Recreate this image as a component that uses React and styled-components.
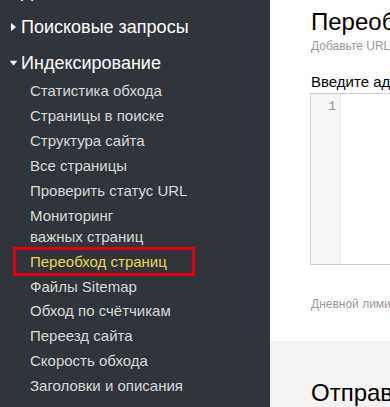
import React from 'react'
import styled, { createGlobalStyle } from 'styled-components'

const GlobalStyle = createGlobalStyle`
  html, body {
    margin: 0;
    padding: 0;
    overflow: hidden;
    background: #fff;
  }
  body {
    font-family: 'Liberation Sans', Arial, sans-serif;
  }
`

const Layout = styled.div`
  display: flex;
  width: 390px;
  height: 407px;
  overflow: hidden;
`

const Sidebar = styled.aside`
  flex: 0 0 270px;
  background: #2f353b;
  overflow: hidden;
`

const Nav = styled.nav`
  margin-top: -21px;
`

const Section = styled.div`
  & + & {
    margin-top: 12px;
  }
`

const Heading = styled.div`
  display: flex;
  align-items: center;
  gap: 5px;
  padding-left: 11px;
  height: 24px;
  font-size: 18px;
  color: #fff;
`

const Caret = ({ open }) => (
  <svg width="5" height="8" viewBox="0 0 5 8" style={open ? { transform: 'rotate(90deg)' } : undefined}>
    <path d="M0 0 L5 4 L0 8 Z" fill="#fff" />
  </svg>
)

const Items = styled.ul`
  list-style: none;
  margin: 3.5px 0 0;
  padding: 0;
`

const Item = styled.li`
  box-sizing: border-box;
  margin-left: 15px;
  width: 178px;
  padding: 1.95px 0 1.95px 15px;
  line-height: 21px;
  font-size: 15px;
  color: ${p => (p.$active ? '#f4d24b' : '#d9d9d9')};
  outline: ${p => (p.$active ? '3px solid #e3000f' : 'none')};
  outline-offset: -1px;
`

const Main = styled.main`
  flex: 1;
  display: flex;
  flex-direction: column;
  min-width: 0;
  background: #fff;
`

const Content = styled.div`
  padding: 8px 0 0 41px;
  height: 343px;
  box-sizing: border-box;
  white-space: nowrap;
`

const Title = styled.h1`
  margin: 0;
  font-size: 24px;
  font-weight: 400;
  line-height: 28px;
  color: #000;
`

const Hint = styled.div`
  margin-top: 3px;
  font-size: 12px;
  line-height: 14px;
  color: #999;
`

const Label = styled.div`
  margin-top: 20px;
  font-size: 15px;
  line-height: 18px;
  color: #000;
`

const Editor = styled.div`
  display: flex;
  box-sizing: border-box;
  margin: 2px 0 0 -1px;
  height: 172px;
  border: 1px solid #cfcfcf;
  border-right: none;
`

const Gutter = styled.div`
  flex: 0 0 30px;
  background: #f6f6f6;
  border-right: 1px solid #ececec;
  text-align: right;
  padding: 5px 4px 0 0;
  box-sizing: border-box;
  font-family: 'Liberation Mono', monospace;
  font-size: 13px;
  color: #999;
`

const Limit = styled.div`
  margin-top: 32px;
  font-size: 12px;
  line-height: 14px;
  color: #999;
`

const GraySection = styled.section`
  flex: 1;
  background: #f4f3f2;
  padding: 38px 0 0 41px;
  white-space: nowrap;
`

const SubTitle = styled.h2`
  margin: 0;
  font-size: 24px;
  font-weight: 400;
  line-height: 28px;
  color: #000;
`

const indexing = [
  'Статистика обхода',
  'Страницы в поиске',
  'Структура сайта',
  'Все страницы',
  'Проверить статус URL',
  'Мониторинг важных страниц',
  'Переобход страниц',
  'Файлы Sitemap',
  'Обход по счётчикам',
  'Переезд сайта',
  'Скорость обхода',
  'Заголовки и описания',
]

const App = () => (
  <>
    <GlobalStyle />
    <Layout>
      <Sidebar>
        <Nav>
          <Section>
            <Heading>
              <Caret />
              Диагностика
            </Heading>
          </Section>
          <Section>
            <Heading>
              <Caret />
              Поисковые запросы
            </Heading>
          </Section>
          <Section>
            <Heading>
              <Caret open />
              Индексирование
            </Heading>
            <Items>
              {indexing.map(name => (
                <Item key={name} $active={name === 'Переобход страниц'}>
                  {name === 'Мониторинг важных страниц' ? (
                    <>
                      Мониторинг
                      <br />
                      важных страниц
                    </>
                  ) : (
                    name
                  )}
                </Item>
              ))}
            </Items>
          </Section>
        </Nav>
      </Sidebar>
      <Main>
        <Content>
          <Title>Переобход страниц</Title>
          <Hint>Добавьте URL страниц, которые нужно переобойти</Hint>
          <Label>Введите адрес страницы</Label>
          <Editor>
            <Gutter>1</Gutter>
          </Editor>
          <Limit>Дневной лимит: 20</Limit>
        </Content>
        <GraySection>
          <SubTitle>Отправленные страницы</SubTitle>
        </GraySection>
      </Main>
    </Layout>
  </>
)

export default App
